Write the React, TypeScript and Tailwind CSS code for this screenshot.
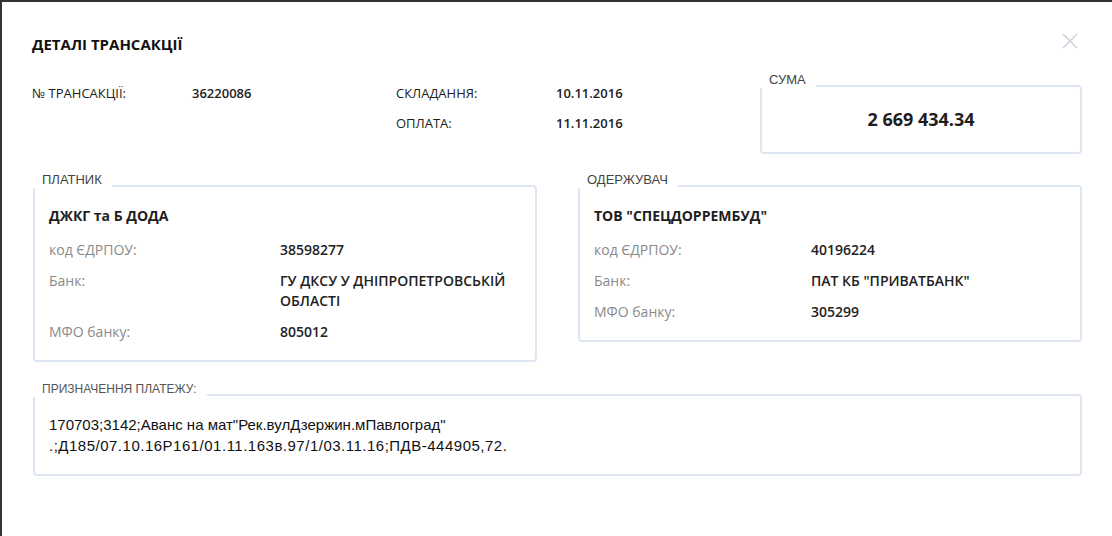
interface Row {
  label: string;
  value: string;
}

interface Party {
  title: string;
  name: string;
  rows: Row[];
  labelWidth: string;
}

const payer: Party = {
  title: 'ПЛАТНИК',
  name: 'ДЖКГ та Б ДОДА',
  labelWidth: 'w-[231px]',
  rows: [
    { label: 'код ЄДРПОУ:', value: '38598277' },
    { label: 'Банк:', value: 'ГУ ДКСУ У ДНІПРОПЕТРОВСЬКІЙ ОБЛАСТІ' },
    { label: 'МФО банку:', value: '805012' },
  ],
};

const receiver: Party = {
  title: 'ОДЕРЖУВАЧ',
  name: 'ТОВ "СПЕЦДОРРЕМБУД"',
  labelWidth: 'w-[217px]',
  rows: [
    { label: 'код ЄДРПОУ:', value: '40196224' },
    { label: 'Банк:', value: 'ПАТ КБ "ПРИВАТБАНК"' },
    { label: 'МФО банку:', value: '305299' },
  ],
};

const sans = "font-['Open_Sans',sans-serif]";

function Legend({ text, small }: { text: string; small?: boolean }) {
  return (
    <span
      className={`absolute left-[-2px] top-[-15px] bg-white pl-[9px] pr-[10px] font-['Liberation_Sans',Arial,sans-serif] leading-[16px] ${
        small ? 'text-[12px] text-[#555]' : 'text-[13px] text-[#444]'
      }`}
    >
      {text}
    </span>
  );
}

function PartyBox({ party }: { party: Party }) {
  return (
    <div className="relative rounded-[4px] border-2 border-[#dfe6f3] px-[14px] pt-[19px] pb-[18px]">
      <Legend text={party.title} />
      <div className="text-[14px] font-bold leading-[20px] text-[#1e1e1e]">{party.name}</div>
      <div className="mt-[14px] flex flex-col gap-[11px]">
        {party.rows.map((row) => (
          <div key={row.label} className="flex text-[14px] leading-[20px]">
            <div className={`${party.labelWidth} shrink-0 text-[#8a8a8a]`}>{row.label}</div>
            <div className="font-semibold text-[#222]">{row.value}</div>
          </div>
        ))}
      </div>
    </div>
  );
}

export default function App() {
  return (
    <div className="h-[536px] overflow-hidden bg-[#333] pl-[2px] pt-[2px]">
      <div className={`relative h-full bg-white pl-[30px] pr-[30px] pt-[32px] ${sans}`}>
        {/* close */}
        <button className="absolute right-[34px] top-[31px]">
          <svg width="16" height="16" viewBox="0 0 16 16" fill="none" stroke="#c9d2df" strokeWidth="1.5">
            <path d="M1 1L15 15M15 1L1 15" />
          </svg>
        </button>

        <h1 className="text-[15px] font-bold leading-[20px] text-[#111]">ДЕТАЛІ ТРАНСАКЦІЇ</h1>

        {/* Header info + amount */}
        <div className="mt-[24px] flex items-start">
          <div className="grid grid-cols-[160px_204px_160px_168px] text-[13px] leading-[30px] text-[#222]">
            <div>№ ТРАНСАКЦІЇ:</div>
            <div className="font-semibold">36220086</div>
            <div>СКЛАДАННЯ:</div>
            <div className="font-semibold">10.11.2016</div>
            <div />
            <div />
            <div>ОПЛАТА:</div>
            <div className="font-semibold">11.11.2016</div>
          </div>
          <div className="relative ml-auto mt-[7px] flex h-[69px] w-[322px] items-center justify-center rounded-[4px] border-2 border-[#dfe6f3]">
            <Legend text="СУМА" />
            <span className="text-[18px] font-bold text-[#1e1e1e]">2 669 434.34</span>
          </div>
        </div>

        {/* Payer / receiver */}
        <div className="ml-px mt-[31px] grid grid-cols-2 items-start gap-[41px]">
          <PartyBox party={payer} />
          <PartyBox party={receiver} />
        </div>

        {/* Payment purpose */}
        <div className="relative ml-px mt-[32px] rounded-[4px] border-2 border-[#dfe6f3] px-[14px] pt-[18px] pb-[18px]">
          <Legend text="ПРИЗНАЧЕННЯ ПЛАТЕЖУ:" small />
          <p className="font-['Liberation_Sans',Arial,sans-serif] text-[15px] leading-[21px] text-[#111]">
            170703;3142;Аванс на мат"Рек.вулДзержин.мПавлоград"
            <br />
            <span className="tracking-[0.5px]">.;Д185/07.10.16Р161/01.11.163в.97/1/03.11.16;ПДВ-444905,72.</span>
          </p>
        </div>
      </div>
    </div>
  );
}
